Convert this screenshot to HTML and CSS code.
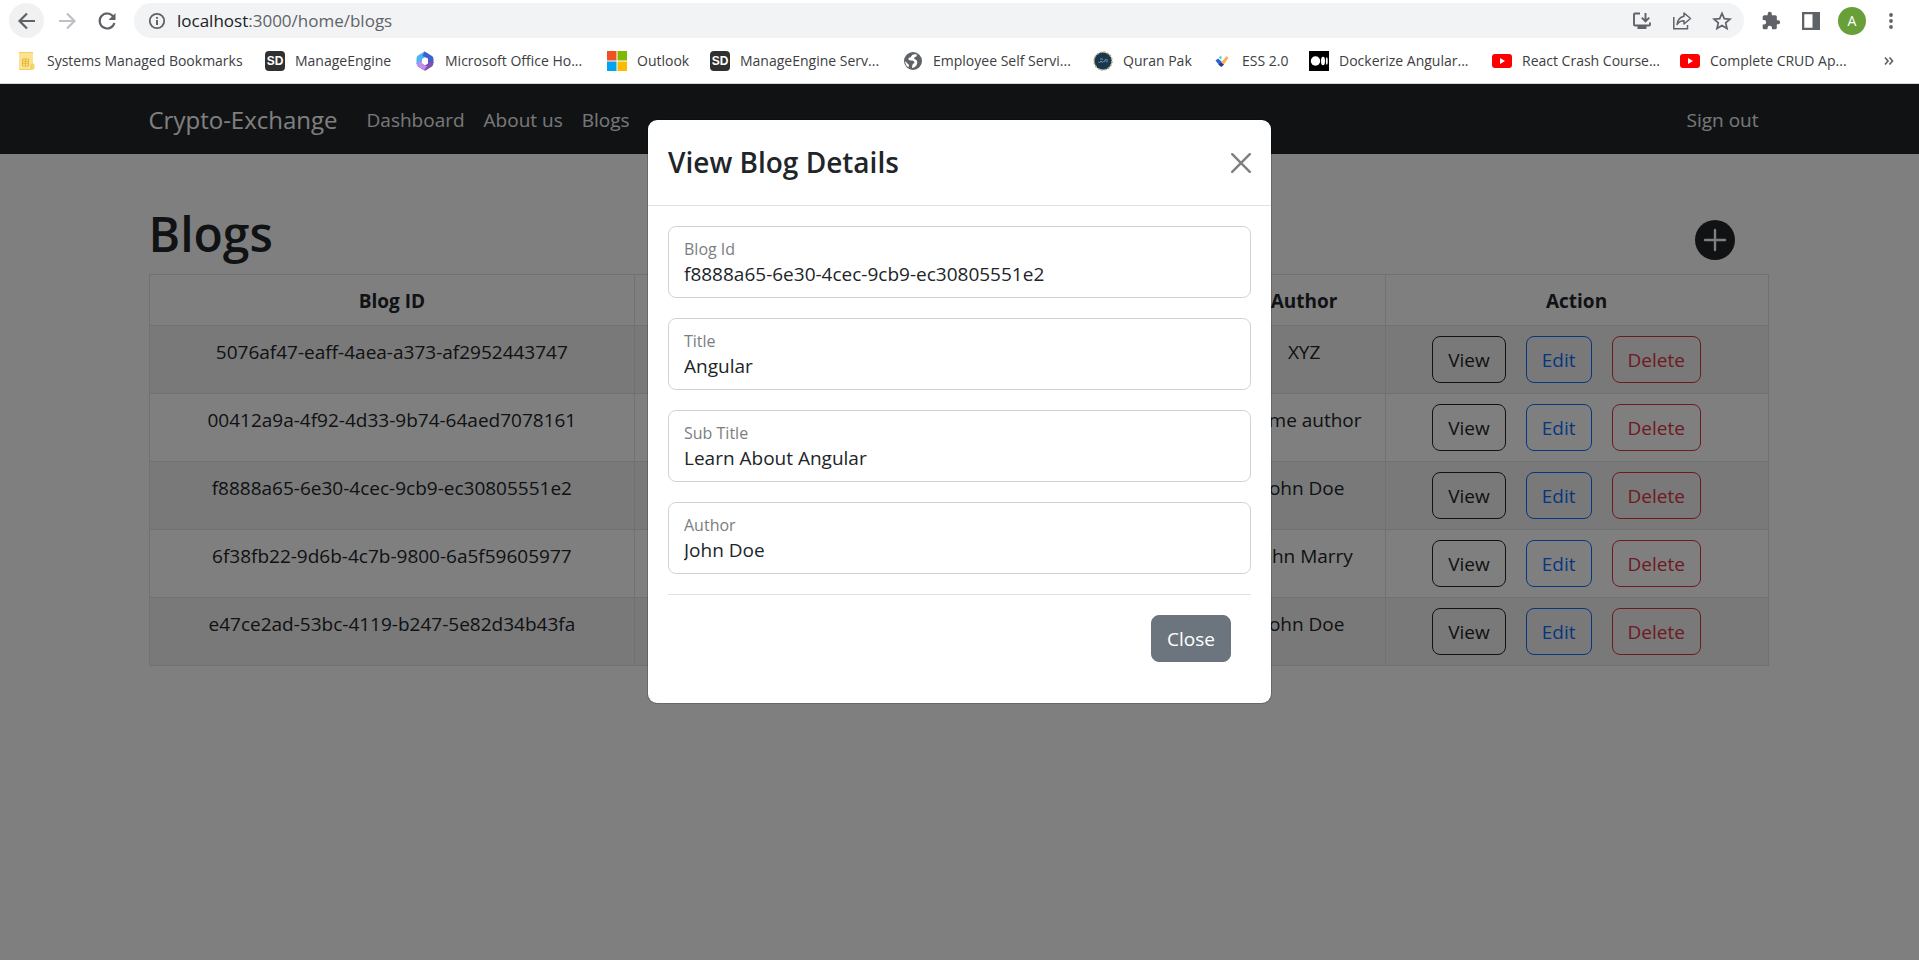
FILE: index.html
```html
<!DOCTYPE html>
<html lang="en">
<head>
<meta charset="utf-8">
<title>Crypto-Exchange</title>
<link rel="stylesheet" href="styles.css">
</head>
<body>
<header class="chrome">
  <div class="toolbar">
    <button class="tool tool-active" aria-label="Back"><svg width="20" height="20" viewBox="0 0 20 20"><path d="M18 10H3M10 2.500L2.500 10L10 17.500" fill="none" stroke="#5f6368" stroke-width="2.200"/></svg></button>
    <button class="tool" aria-label="Forward"><svg width="20" height="20" viewBox="0 0 20 20"><path d="M2 10H17M10 2.500L17.500 10L10 17.500" fill="none" stroke="#bdc1c6" stroke-width="2.200"/></svg></button>
    <button class="tool" aria-label="Reload"><svg width="20" height="20" viewBox="0 0 20 20"><path d="M16.200 5.500A7.500 7.500 0 1 0 17.400 12" fill="none" stroke="#5f6368" stroke-width="2.200"/><path d="M18.500 2V9H11.500Z" fill="#5f6368"/></svg></button>
    <div class="omnibox">
      <svg width="18" height="18" viewBox="0 0 18 18"><circle cx="9" cy="9" r="7.200" fill="none" stroke="#5f6368" stroke-width="1.800"/><path d="M8 8H10V13H8ZM8 5H10V6.800H8Z" fill="#5f6368"/></svg>
      <p class="url"><span class="host">localhost</span>:3000/home/blogs</p>
      <div class="omni-tools">
        <button class="mini" aria-label="Install"><svg width="20" height="20" viewBox="0 0 20 20"><path d="M8 2.500H3Q2 2.500 2 3.500V13.500Q2 14.500 3 14.500H17Q18 14.500 18 13.500V11.500" fill="none" stroke="#5f6368" stroke-width="1.900"/><path d="M5.500 15H14.500V18H5.500Z" fill="#5f6368"/><path d="M13.500 2V10M9.800 6.700L13.500 10.400L17.200 6.700" fill="none" stroke="#5f6368" stroke-width="1.900"/></svg></button>
        <button class="mini" aria-label="Share"><svg width="20" height="20" viewBox="0 0 20 20"><path d="M1.800 6V17.700H15.500V14" fill="none" stroke="#5f6368" stroke-width="1.500"/><path d="M12 2L18.500 7.500L12 13V9.800Q7.500 9.800 5 13.500Q6 6.500 12 5.300Z" fill="none" stroke="#5f6368" stroke-width="1.500" stroke-linejoin="round"/></svg></button>
        <button class="mini" aria-label="Bookmark"><svg width="20" height="20" viewBox="0 0 20 20"><path d="M10 2.300L12.300 7.600L18 8.100L13.700 11.900L15 17.600L10 14.600L5 17.600L6.300 11.900L2 8.100L7.700 7.600Z" fill="none" stroke="#5f6368" stroke-width="1.700"/></svg></button>
      </div>
    </div>
    <div class="actions">
      <button class="mini" aria-label="Extensions"><svg width="20" height="20" viewBox="0 0 24 24"><path fill="#5f6368" d="M20.500 11H19V7a2 2 0 0 0-2-2h-4V3.500a2.500 2.500 0 0 0-5 0V5H4a2 2 0 0 0-2 2v3.800h1.500a2.700 2.700 0 0 1 0 5.400H2V20a2 2 0 0 0 2 2h3.800v-1.500a2.700 2.700 0 0 1 5.400 0V22H17a2 2 0 0 0 2-2v-4h1.500a2.500 2.500 0 0 0 0-5z"/></svg></button>
      <button class="mini" aria-label="Side panel"><svg width="20" height="20" viewBox="0 0 20 20"><path fill="#5f6368" fill-rule="evenodd" d="M1 1H19V19H1ZM3.300 3.300V16.700H11.500V3.300Z"/></svg></button>
      <button class="avatar" aria-label="Profile">A</button>
      <button class="mini" aria-label="Menu"><svg width="20" height="20" viewBox="0 0 20 20"><g fill="#5f6368"><circle cx="10" cy="4" r="1.900"/><circle cx="10" cy="10" r="1.900"/><circle cx="10" cy="16" r="1.900"/></g></svg></button>
    </div>
  </div>
  <nav class="bookmarks">
    <a href="#" class="mark"><svg width="20" height="20" viewBox="0 0 20 20"><rect x="2" y="1" width="14" height="18" rx="1" fill="#fde293"/><path d="M2 1.500H16M2 18.500H14" stroke="#f6cf57" stroke-width="1"/><path d="M5.500 8H11.500V15H5.500ZM5.500 10.300H11.500M5.500 12.600H11.500M8.500 8V15" fill="none" stroke="#e5b93a"/><rect x="14" y="13" width="3" height="5" rx="1" fill="#f9d766" stroke="#e9c046" stroke-width=".6"/></svg>Systems Managed Bookmarks</a>
    <a href="#" class="mark"><span class="sd">SD</span>ManageEngine</a>
    <a href="#" class="mark"><svg width="20" height="20" viewBox="0 0 20 20"><path d="M9.500 .5L3 4.500Q1.500 5.500 1.500 7.500V13L7 15V8L12 5L14 3Z" fill="#4fb3f0"/><path d="M9.500 .5L17 5Q18.500 6 18.500 8V12L13 11V7.500L7.500 5Z" fill="#3d62d0"/><path d="M1.500 12.500L3 15.500L8.500 19Q10 20 11.500 19L17 15.500Q18.500 14.500 18.500 11L13 11V12.500L10 14.500L7 12.500Z" fill="#8050b0"/><path d="M1.500 12.500L3 15.500L9 19.200L12 15L9.500 14.500L7 12.500V10Z" fill="#c08df0"/></svg>Microsoft Office Ho...</a>
    <a href="#" class="mark"><svg width="20" height="20" viewBox="0 0 20 20"><path fill="#f25022" d="M0 0H9.500V9.500H0Z"/><path fill="#7fba00" d="M10.500 0H20V9.500H10.500Z"/><path fill="#00a4ef" d="M0 10.500H9.500V20H0Z"/><path fill="#ffb900" d="M10.500 10.500H20V20H10.500Z"/></svg>Outlook</a>
    <a href="#" class="mark"><span class="sd">SD</span>ManageEngine Serv...</a>
    <a href="#" class="mark"><svg width="20" height="20" viewBox="0 0 20 20"><circle cx="10" cy="10" r="9" fill="#5f6368"/><path d="M14 3.500Q9 2.500 8.500 5Q8 6.500 5.500 7Q5 9.500 8 9.500Q11.500 9 11.500 12Q9 12.500 9 17Q13 16.500 14 13Q15 10 12.500 8.500Q10 7.500 12 6Q14 6 14 3.500ZM2 10L6 14L5.500 16.500Q2.500 14.500 2 10Z" fill="#fff"/></svg>Employee Self Servi...</a>
    <a href="#" class="mark"><svg width="20" height="20" viewBox="0 0 20 20"><circle cx="10" cy="10" r="8.800" fill="#17384f" stroke="#b59f78" stroke-width="1.800" stroke-dasharray="2 1.450"/><circle cx="10" cy="10" r="8" fill="#17384f"/><path d="M5.500 11Q7 12.500 8 10Q9 12.500 10.500 10.500Q12 12 12.500 8M14 8V11.500M7 8H10" fill="none" stroke="#8195a3" stroke-width="1"/></svg>Quran Pak</a>
    <a href="#" class="mark"><svg width="20" height="20" viewBox="0 0 20 20"><path d="M3.500 9.500L6 7.500L10 11L7.500 14.500Z" fill="#2864dc"/><path d="M9.500 11L14.500 5L16.500 7L11 14.500Z" fill="#f9b25c"/><path d="M6.500 13.500L9 11.500L12 13.500L10 15.500Q9 16 8 15Z" fill="#263d86"/><circle cx="8.500" cy="6.500" r="1.300" fill="#42d4b0"/></svg>ESS 2.0</a>
    <a href="#" class="mark"><svg width="20" height="20" viewBox="0 0 20 20"><path d="M0 0H20V20H0Z"/><circle cx="6.500" cy="10" r="4.700" fill="#fff"/><ellipse cx="14" cy="10" rx="2" ry="4.300" fill="#fff"/><ellipse cx="17.800" cy="10" rx=".9" ry="3.800" fill="#fff"/></svg>Dockerize Angular...</a>
    <a href="#" class="mark"><svg width="20" height="20" viewBox="0 0 20 20"><rect y="3" width="20" height="14" rx="3" fill="#f00"/><path d="M8 7L13 10L8 13Z" fill="#fff"/></svg>React Crash Course...</a>
    <a href="#" class="mark"><svg width="20" height="20" viewBox="0 0 20 20"><rect y="3" width="20" height="14" rx="3" fill="#f00"/><path d="M8 7L13 10L8 13Z" fill="#fff"/></svg>Complete CRUD Ap...</a>
    <button class="more" aria-label="More bookmarks"><svg width="10" height="10" viewBox="0 0 10 10"><path d="M1 1.500L4 5L1 8.500M5.500 1.500L8.500 5L5.500 8.500" fill="none" stroke="#5f6368" stroke-width="1.700"/></svg></button>
  </nav>
</header>

<div class="page">
  <nav class="navbar">
    <div class="container nav-row">
      <a href="#" class="brand">Crypto-Exchange</a>
      <a href="#" class="nav-link">Dashboard</a>
      <a href="#" class="nav-link">About us</a>
      <a href="#" class="nav-link">Blogs</a>
      <a href="#" class="nav-link sign-out">Sign out</a>
    </div>
  </nav>
  <main class="container">
    <div class="title-row">
      <h1 class="title">Blogs</h1>
      <button class="add" aria-label="Add blog"><svg width="40" height="40" viewBox="0 0 40 40"><path d="M20 10V30M10 20H30" stroke="#fff" stroke-width="2.400" stroke-linecap="round"/></svg></button>
    </div>
    <table class="table">
      <colgroup><col class="col-id"><col class="col-title"><col class="col-author"><col class="col-action"></colgroup>
      <thead><tr><th>Blog ID</th><th></th><th>Author</th><th>Action</th></tr></thead>
      <tbody>
        <tr><td>5076af47-eaff-4aea-a373-af2952443747</td><td></td><td>XYZ</td><td><div class="row-actions"><button class="btn view">View</button><button class="btn edit">Edit</button><button class="btn delete">Delete</button></div></td></tr>
        <tr><td>00412a9a-4f92-4d33-9b74-64aed7078161</td><td></td><td>Some author</td><td><div class="row-actions"><button class="btn view">View</button><button class="btn edit">Edit</button><button class="btn delete">Delete</button></div></td></tr>
        <tr><td>f8888a65-6e30-4cec-9cb9-ec30805551e2</td><td></td><td>John Doe</td><td><div class="row-actions"><button class="btn view">View</button><button class="btn edit">Edit</button><button class="btn delete">Delete</button></div></td></tr>
        <tr><td>6f38fb22-9d6b-4c7b-9800-6a5f59605977</td><td></td><td>John Marry</td><td><div class="row-actions"><button class="btn view">View</button><button class="btn edit">Edit</button><button class="btn delete">Delete</button></div></td></tr>
        <tr><td>e47ce2ad-53bc-4119-b247-5e82d34b43fa</td><td></td><td>John Doe</td><td><div class="row-actions"><button class="btn view">View</button><button class="btn edit">Edit</button><button class="btn delete">Delete</button></div></td></tr>
      </tbody>
    </table>
  </main>

  <div class="backdrop">
    <section class="modal" role="dialog" aria-labelledby="modal-title">
      <div class="modal-header">
        <h2 class="modal-title" id="modal-title">View Blog Details</h2>
        <button class="x" aria-label="Close dialog"><svg width="20" height="20" viewBox="0 0 20 20"><path d="M1.200 1.200L18.800 18.800M18.800 1.200L1.200 18.800" stroke="#7f7f7f" stroke-width="2.400" stroke-linecap="round"/></svg></button>
      </div>
      <form class="modal-body">
        <div class="field"><label for="blog-id">Blog Id</label><input id="blog-id" readonly value="f8888a65-6e30-4cec-9cb9-ec30805551e2"></div>
        <div class="field"><label for="blog-title">Title</label><input id="blog-title" readonly value="Angular"></div>
        <div class="field"><label for="blog-sub">Sub Title</label><input id="blog-sub" readonly value="Learn About Angular"></div>
        <div class="field"><label for="blog-author">Author</label><input id="blog-author" readonly value="John Doe"></div>
        <div class="modal-footer"><button type="button" class="btn close">Close</button></div>
      </form>
    </section>
  </div>
</div>
</body>
</html>
```
FILE: styles.css
```css
* { box-sizing: border-box; }
body {
  margin: 0;
  min-height: 100vh;
  display: flex;
  flex-direction: column;
  font: 19px/30px "Open Sans", "Noto Sans", sans-serif;
  color: #212529;
  background: #fff;
}
a { color: inherit; text-decoration: none; }
button { font: inherit; padding: 0; border: 0; background: none; }
svg { display: block; flex: none; }
p, h1, h2 { margin: 0; }

/* Browser chrome */
.chrome { border-bottom: 1px solid #d5d7da; }
.toolbar { display: flex; align-items: center; padding: 3px 18px 0 9px; height: 38px; }
.tool { display: grid; place-items: center; width: 35px; height: 35px; border-radius: 50%; margin-right: 5px; }
.tool-active { background: #f1f1f2; }
.omnibox {
  flex: 1;
  display: flex;
  align-items: center;
  height: 35px;
  margin-left: 5px;
  padding: 0 12px 0 14px;
  border-radius: 18px;
  background: #f1f3f4;
}
.url { margin-left: 11px; font-size: 17px; line-height: 24px; color: #5f6368; }
.host { color: #202124; }
.omni-tools { display: flex; gap: 20px; margin-left: auto; }
.actions { display: flex; align-items: center; margin-left: 17px; gap: 20px; }
.avatar { width: 28px; height: 28px; border-radius: 50%; background: #689f38; color: #fff; font-size: 14px; line-height: 28px; margin: 0 -5px 0 -3px; }
.bookmarks {
  display: grid;
  grid-template-columns: 248fr 150fr 192fr 103fr 193fr 190fr 119fr 97fr 183fr 188fr 204fr 10px;
  align-items: center;
  height: 45px;
  padding: 0 25px 0 17px;
  font-size: 14px;
  line-height: 20px;
  color: #3c4043;
  white-space: nowrap;
}
.mark { display: flex; align-items: center; gap: 10px; min-width: 0; }
.sd { width: 20px; height: 20px; border-radius: 4px; background: #303030; color: #fff; font: bold 12px/20px "Liberation Sans", sans-serif; text-align: center; }

/* Application */
.page { position: relative; flex: 1; }
.container { max-width: 1650px; margin: 0 auto; padding: 0 16px 0 14px; }
.navbar { background: #212529; color: #fff; }
.nav-row { display: flex; align-items: center; height: 70px; gap: 19px; padding-top: 2px; }
.brand { font-size: 24px; margin-right: 10px; }
.nav-link { color: #f0f0f0; }
.sign-out { margin-left: auto; margin-right: 10px; }
.title-row { display: flex; justify-content: space-between; align-items: center; padding: 50px 34px 10px 0; }
.title { font-size: 48px; line-height: 60px; font-weight: 600; }
.add { margin-top: 12px; height: 40px; border-radius: 50%; background: #212529; }
.table { width: 100%; table-layout: fixed; border-collapse: collapse; text-align: center; }
.col-id { width: 30%; }
.col-title { width: 36.350%; }
.col-author { width: 10%; }
.table th, .table td { border: 1px solid #dee2e6; vertical-align: top; }
.table th { padding: 11px 10px 9px; font-weight: 700; }
.table td { padding: 10px; line-height: 32px; white-space: nowrap; }
.table tbody tr:nth-child(odd) { background: #f2f2f2; }
.row-actions { display: flex; justify-content: center; gap: 20px; padding-right: 20px; }
.btn { padding: 8px 15px 6px; height: 47px; border: 1px solid; border-radius: 8px; line-height: 31px; }
.view { color: #212529; }
.edit { color: #0d6efd; }
.delete { color: #dc3545; }

/* Dialog */
.backdrop { position: absolute; inset: 0; padding: 35px 20px; background: rgba(0, 0, 0, .5); }
.modal {
  max-width: 625px;
  margin: 0 auto;
  border: 1px solid rgba(0, 0, 0, .18);
  border-radius: 10px;
  background: #fff;
  background-clip: padding-box;
}
.modal-header { display: flex; align-items: center; justify-content: space-between; padding: 20px; border-bottom: 1px solid #dee2e6; }
.modal-title { font-size: 28px; line-height: 45px; font-weight: 600; }
.modal-body { display: flex; flex-direction: column; gap: 20px; padding: 20px; }
.field { display: flex; flex-direction: column; padding: 10px 15px; border: 1px solid #ced4da; border-radius: 8px; }
.field label { font-size: 16px; line-height: 25px; color: #7b7e81; }
.field input { width: 100%; height: 25px; padding: 0; border: 0; outline: 0; font: inherit; line-height: 25px; color: #212529; background: none; }
.modal-footer { display: flex; justify-content: flex-end; padding: 20px 20px 21px; border-top: 1px solid #dee2e6; }
.close { border-color: #6c757d; background: #6c757d; color: #fff; }
```
